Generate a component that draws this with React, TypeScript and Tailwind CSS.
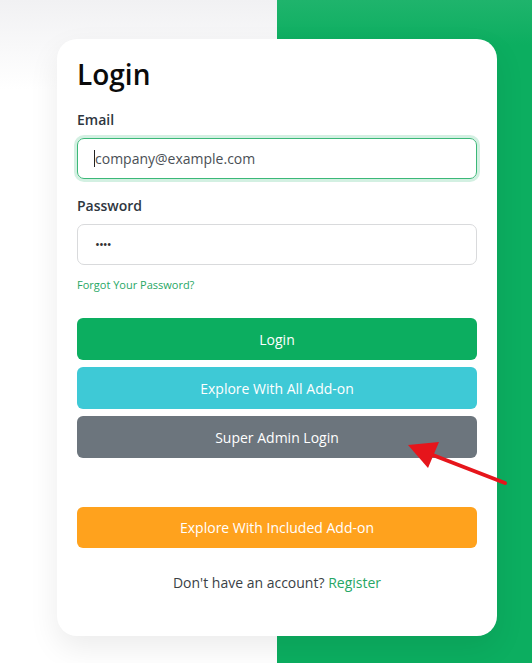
export default function App() {
  return (
    <div
      className="relative w-[532px] h-[663px] overflow-hidden bg-[linear-gradient(to_right,transparent_277px,#0cae60_277px)]"
      style={{ fontFamily: '"Open Sans", "Noto Sans", sans-serif' }}
    >
      {/* left light backdrop + green panel top highlight */}
      <div className="absolute inset-0 flex pointer-events-none">
        <div className="w-[277px] h-full bg-[linear-gradient(to_bottom,#f1f1f3,#ffffff_90px)]" />
        <div className="flex-1 h-full bg-[linear-gradient(to_bottom,#1fb46c,#0cae60_45px)]" />
      </div>

      <div className="relative ml-[57px] mt-[39px] w-[440px] h-[597px] bg-white rounded-[20px] shadow-[0_12px_30px_rgba(0,0,0,0.08)] px-[20px] pt-[17px]">
        <h1 className="text-[28px] leading-[36px] font-semibold text-[#0b0b0b] mb-[18px]">Login</h1>

        <label className="block text-[14px] leading-[20px] font-semibold text-[#2e3640] mb-[8px]">Email</label>
        <div className="h-[41px] rounded-[7px] border border-[#3bb878] shadow-[0_0_0_3px_rgba(12,174,96,0.18)] flex items-center pl-[16px] text-[14px] text-[#4a4f55]">
          <span className="w-px h-[17px] bg-[#222]" />
          company@example.com
        </div>

        <label className="block mt-[17px] text-[14px] leading-[20px] font-semibold text-[#2e3640] mb-[8px]">Password</label>
        <div className="h-[41px] rounded-[7px] border border-[#d9dadc] flex items-center pl-[17px] text-[13px] text-[#333] tracking-[-1px]">
          ••••
        </div>

        <div className="mt-[13px] text-[11px] leading-[14px] text-[#27a765]">Forgot Your Password?</div>

        <div className="mt-[26px] flex flex-col gap-[7px]">
          <button className="h-[42px] rounded-[6px] bg-[#0cae60] text-white text-[14px]">Login</button>
          <button className="h-[42px] rounded-[6px] bg-[#3ec9d6] text-white text-[14px]">Explore With All Add-on</button>
          <button className="h-[42px] rounded-[6px] bg-[#6c757d] text-white text-[14px]">Super Admin Login</button>
        </div>

        <button className="mt-[49px] w-full h-[41px] rounded-[6px] bg-[#ffa21d] text-white text-[14px]">
          Explore With Included Add-on
        </button>

        <p className="mt-[25px] text-center text-[14px] leading-[20px] text-[#3a3f45]">
          Don't have an account? <span className="text-[#27a765]">Register</span>
        </p>
      </div>

      {/* red annotation arrow */}
      <svg className="absolute left-0 top-0 pointer-events-none" width="532" height="663">
        <line x1="505" y1="483" x2="425" y2="452" stroke="#e6151b" strokeWidth="4" strokeLinecap="round" />
        <polygon points="408,445 439,442 428,468" fill="#e6151b" />
      </svg>
    </div>
  );
}
